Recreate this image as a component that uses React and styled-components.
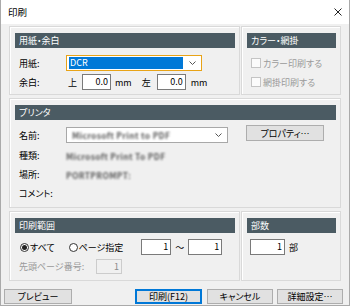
import React from 'react';
import styled, { createGlobalStyle, css } from 'styled-components';

const Global = createGlobalStyle`
  html, body { margin: 0; padding: 0; background: #ffffff; }
  * { box-sizing: border-box; }
  body {
    font-family: "Noto Sans CJK JP", "Noto Sans", sans-serif;
    font-size: 9px;
    font-feature-settings: "palt";
    color: #000;
  }
`;

const Window = styled.div`
  width: 350px;
  height: 306px;
  border: 1px solid #aaaaaa;
  border-top: none;
  background: #f0f0f0;
  display: flex;
  flex-direction: column;
`;

const TitleBar = styled.div`
  height: 24px;
  background: #ffffff;
  display: flex;
  align-items: center;
  justify-content: space-between;
  padding: 0 7px 0 7px;
  font-size: 9.5px;
  flex: none;
`;

const Body = styled.div`
  display: flex;
  flex-direction: column;
  padding-top: 2px;
`;

const Row = styled.div`
  display: flex;
  gap: 1px;
  margin: ${p => p.$mt || 0}px 8px 0 8px;
`;

const Panel = styled.div`
  border: 1px solid #d9d9d9;
  box-shadow: inset 1px 1px 0 #ffffff;
  height: ${p => p.$h}px;
  width: ${p => (p.$w ? `${p.$w}px` : 'auto')};
  flex: ${p => (p.$w ? 'none' : 1)};
  padding: 6px 4px 0 5px;
  display: flex;
  flex-direction: column;
`;

const Header = styled.div`
  height: 15px;
  background: #4b5b63;
  color: #ffffff;
  line-height: 15px;
  padding-left: 4px;
  font-size: 9px;
  flex: none;
`;

const FormRow = styled.div`
  display: flex;
  align-items: ${p => p.$align || 'center'};
  height: ${p => p.$h || 16}px;
  margin-top: ${p => p.$mt || 0}px;
  padding-left: ${p => (p.$pl === undefined ? 4 : p.$pl)}px;
  flex: none;
`;

const Label = styled.span`
  width: ${p => p.$w || 47}px;
  flex: none;
  color: ${p => (p.$disabled ? '#9a9a9a' : '#000')};
  white-space: nowrap;
`;

const Text = styled.span`
  margin-left: ${p => p.$ml || 0}px;
  color: ${p => (p.$disabled ? '#9a9a9a' : '#000')};
  white-space: nowrap;
  flex: none;
`;

const Blurred = styled.span`
  color: #5a5a5a;
  filter: blur(1.3px);
  white-space: nowrap;
  font-size: 8.5px;
  font-weight: 700;
  letter-spacing: 0.3px;
`;

const SelectBox = styled.div`
  width: ${p => p.$w}px;
  height: 16px;
  margin-top: ${p => p.$mt || 0}px;
  background: #ffffff;
  border: 1px solid ${p => (p.$focus ? '#e8a317' : '#a8a8a8')};
  display: flex;
  align-items: center;
  padding: 0 5px 0 2px;
  flex: none;
`;

const Highlight = styled.div`
  flex: 1;
  height: 12px;
  background: #0078d7;
  color: #ffffff;
  line-height: 12px;
  padding-left: 1px;
  margin-right: 6px;
`;

const SelectValue = styled.div`
  flex: 1;
  padding-left: 3px;
  overflow: hidden;
`;

const Chevron = () => (
  <svg width="7" height="4" viewBox="0 0 7 4" style={{ flex: 'none' }}>
    <path d="M0.5 0.5 L3.5 3.5 L6.5 0.5" fill="none" stroke="#555" strokeWidth="1" />
  </svg>
);

const NumInput = styled.div`
  width: ${p => p.$w}px;
  height: ${p => p.$h || 16}px;
  margin-left: ${p => p.$ml || 0}px;
  background: ${p => (p.$disabled ? '#f0f0f0' : '#ffffff')};
  border: 1px solid ${p => (p.$disabled ? '#cccccc' : '#7a7a7a')};
  color: ${p => (p.$disabled ? '#8a8a8a' : '#000')};
  text-align: right;
  padding-right: 2px;
  line-height: ${p => (p.$h || 16) - 2}px;
  flex: none;
`;

const Check = styled.span`
  width: 10px;
  height: 10px;
  border: 1px solid #c4c4c4;
  background: #fbfbfb;
  flex: none;
  margin-right: 2px;
`;

const Radio = styled.span`
  width: 9px;
  height: 9px;
  border-radius: 50%;
  border: 1px solid #333333;
  background: #ffffff;
  margin-left: ${p => p.$ml || 0}px;
  margin-right: 1px;
  flex: none;
  display: flex;
  align-items: center;
  justify-content: center;
  ${p =>
    p.$on &&
    css`
      &::after {
        content: '';
        width: 5px;
        height: 5px;
        border-radius: 50%;
        background: #222;
      }
    `}
`;

const Button = styled.div`
  width: ${p => p.$w}px;
  height: ${p => p.$h || 15}px;
  margin-left: ${p => p.$ml || 0}px;
  background: #e1e1e1;
  border: 1px solid ${p => (p.$focus ? '#0078d7' : '#adadad')};
  box-shadow: ${p => (p.$focus ? 'inset 0 0 0 1px #0078d7' : 'none')};
  display: flex;
  align-items: center;
  justify-content: center;
  flex: none;
  white-space: nowrap;
`;

const ButtonBar = styled.div`
  display: flex;
  margin: 8px 6px 0 3px;
`;

const CloseIcon = () => (
  <svg width="8" height="8" viewBox="0 0 8 8">
    <path d="M0.5 0.5 L7.5 7.5 M7.5 0.5 L0.5 7.5" stroke="#222" strokeWidth="1" />
  </svg>
);

export default function App() {
  return (
    <>
      <Global />
      <Window>
        <TitleBar>
          <span>印刷</span>
          <CloseIcon />
        </TitleBar>
        <Body>
          <Row>
            <Panel $w={231} $h={69}>
              <Header>用紙・余白</Header>
              <FormRow $mt={7}>
                <Label>用紙:</Label>
                <SelectBox $w={136} $focus>
                  <Highlight>DCR</Highlight>
                  <Chevron />
                </SelectBox>
              </FormRow>
              <FormRow $mt={3}>
                <Label>余白:</Label>
                <Text $ml={2}>上</Text>
                <NumInput $w={29} $ml={5}>0.0</NumInput>
                <Text $ml={4}>mm</Text>
                <Text $ml={10}>左</Text>
                <NumInput $w={29} $ml={6}>0.0</NumInput>
                <Text $ml={5}>mm</Text>
              </FormRow>
            </Panel>
            <Panel $h={69}>
              <Header>カラー・網掛</Header>
              <FormRow $mt={7}>
                <Check />
                <Text $disabled>カラー印刷する</Text>
              </FormRow>
              <FormRow $mt={3}>
                <Check />
                <Text $disabled>網掛印刷する</Text>
              </FormRow>
            </Panel>
          </Row>
          <Row $mt={3}>
            <Panel $h={110}>
              <Header>プリンタ</Header>
              <FormRow $mt={5} $h={18} $align="flex-start">
                <Label style={{ alignSelf: 'center', marginTop: 2 }}>名前:</Label>
                <SelectBox $w={162} $mt={2}>
                  <SelectValue>
                    <Blurred>Microsoft Print to PDF</Blurred>
                  </SelectValue>
                  <Chevron />
                </SelectBox>
                <Button $w={78} $h={16} $ml={18}>
                  プロパティ…
                </Button>
              </FormRow>
              <FormRow $h={19} $mt={3}>
                <Label>種類:</Label>
                <Blurred>Microsoft Print To PDF</Blurred>
              </FormRow>
              <FormRow $h={19}>
                <Label>場所:</Label>
                <Blurred>PORTPROMPT:</Blurred>
              </FormRow>
              <FormRow $h={19}>
                <Label>コメント:</Label>
              </FormRow>
            </Panel>
          </Row>
          <Row $mt={3}>
            <Panel $w={231} $h={70}>
              <Header>印刷範囲</Header>
              <FormRow $mt={6} $pl={5}>
                <Radio $on />
                <Text>すべて</Text>
                <Radio $ml={14} />
                <Text>ページ指定</Text>
                <NumInput $w={30} $ml={18}>1</NumInput>
                <Text $ml={4}>～</Text>
                <NumInput $w={34} $ml={4}>1</NumInput>
              </FormRow>
              <FormRow $mt={4} $h={15}>
                <Label $w={77} $disabled>先頭ページ番号:</Label>
                <NumInput $w={26} $h={15} $disabled>1</NumInput>
              </FormRow>
            </Panel>
            <Panel $h={70}>
              <Header>部数</Header>
              <FormRow $mt={6} $pl={3}>
                <NumInput $w={35}>1</NumInput>
                <Text $ml={4}>部</Text>
              </FormRow>
            </Panel>
          </Row>
          <ButtonBar>
            <Button $w={68}>プレビュー</Button>
            <Button $w={67} $ml={63} $focus>
              印刷(F12)
            </Button>
            <Button $w={66} $ml={5}>キャンセル</Button>
            <Button $w={66} $ml={4}>詳細設定…</Button>
          </ButtonBar>
        </Body>
      </Window>
    </>
  );
}
